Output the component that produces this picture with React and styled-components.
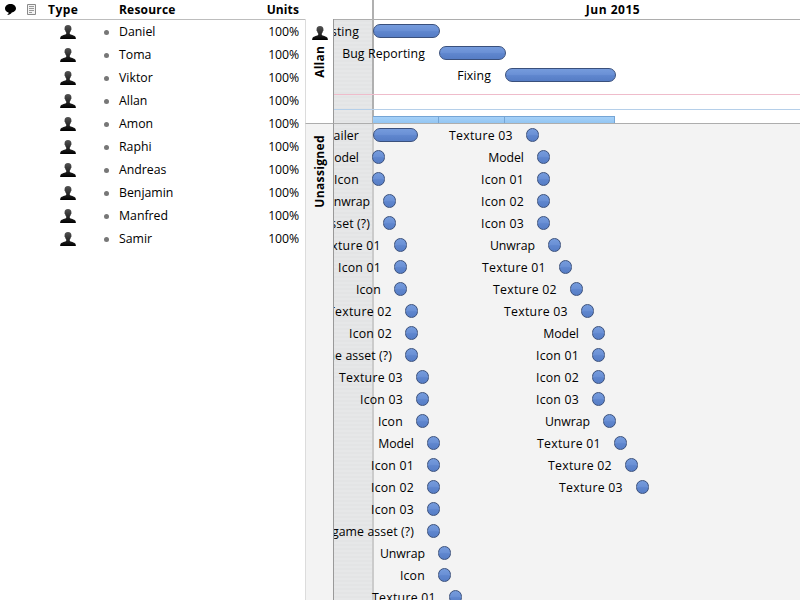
import React from "react";
import styled, { createGlobalStyle } from "styled-components";

const Global = createGlobalStyle`
  * { box-sizing: border-box; }
  body { margin: 0; background: #fff; color: #000; overflow: hidden; font-family: "Open Sans", "Noto Sans", sans-serif; font-size: 12.3px; }
`;
const Page = styled.div`
  display: flex; width: 800px; height: 600px; overflow: hidden; background: #fff;
`;
const Table = styled.section`
  width: 305px; flex: none;
`;
const columns = `display: grid; grid-template-columns: 20px 24px 54px 21px 120px 1fr; align-items: center;`;
const TableHead = styled.header`
  ${columns}
  height: 20px; border-bottom: 1px solid #bdbdbd; font-weight: 700; font-size: 12px; padding-right: 6px;
`;
const TableRow = styled.div`
  ${columns}
  height: 23px; padding-right: 6px;
`;
const HeadCell = styled.span`
  letter-spacing: ${(p) => p.$track || 0}px;
  padding-left: ${(p) => p.$pad || 0}px;
  text-align: ${(p) => (p.$end ? "right" : "left")};
  line-height: 19px; height: 19px; white-space: nowrap;
  svg { display: block; }
`;
const Name = styled.span`
  line-height: 22px;
`;
const Units = styled.span`
  text-align: right; line-height: 22px; letter-spacing: -0.1px;
`;
const IconCell = styled.span`
  grid-column: 3; padding-left: 15.5px; height: 14px;
  svg { display: block; }
`;
const Bullet = styled.i`
  width: 5px; height: 5px; border-radius: 50%; background: #777; margin: 2px 0 0 6px;
`;
const Side = styled.aside`
  width: 29px; flex: none; padding-top: 19px;
`;
const SideLane = styled.div`
  height: ${(p) => p.$height}px; padding-top: ${(p) => p.$top}px;
  background: ${(p) => p.$bg}; border-left: 1px solid #dcdcdc; border-right: 1px solid #999;
  border-bottom: ${(p) => (p.$line ? "1px solid #adadad" : "0")};
  display: flex; flex-direction: column; align-items: center; gap: 6px;
`;
const Vertical = styled.span`
  writing-mode: vertical-rl; transform: rotate(180deg); font-weight: 700; font-size: 12px; line-height: 17px;
  letter-spacing: ${(p) => p.$track || 0}px; white-space: nowrap;
`;
const Chart = styled.main`
  flex: 1; min-width: 0; overflow: hidden;
`;
const Months = styled.header`
  display: grid; grid-template-columns: 38px 1fr; height: 20px; border-bottom: 1px solid #adadad;
`;
const Month = styled.div`
  grid-column: 2; border-left: 2px solid #b0b0b0; padding-left: 52px; line-height: 20px;
  text-align: center; font-weight: 700; font-size: 12px; letter-spacing: 0.5px;
`;
const Lane = styled.div`
  height: ${(p) => p.$height}px; overflow: hidden; display: flex; flex-direction: column;
  border-bottom: ${(p) => (p.$line ? "1px solid #adadad" : "0")};
  background:
    linear-gradient(${(p) => p.$edge}, ${(p) => p.$edge}) 38px 0 / 2px 100% no-repeat,
    repeating-linear-gradient(#e3e4e5 0 2px, #e6e7e8 2px 4px) 0 0 / 38px 100% no-repeat,
    ${(p) => p.$bg};
`;
const TaskRow = styled.div`
  height: 22px; flex: none; display: flex; align-items: center;
`;
const Task = styled.div`
  width: ${(p) => p.$width}px; flex: none; display: flex; align-items: center; justify-content: flex-end; gap: 13.5px;
`;
const Label = styled.span`
  flex: none; white-space: nowrap; line-height: 20px; padding-top: 2px; letter-spacing: ${(p) => p.$track || 0}px;
`;
const Bar = styled.i`
  flex: none; width: ${(p) => p.$width}px; height: 14px; border: 1px solid #3a507c; border-radius: 7px;
  background: linear-gradient(#759bdc, #6b91d6 45%, #5f86ce 55%, #567dc5);
`;
const LimitLine = styled.div`
  flex: none; height: 1px; margin-top: ${(p) => p.$gap}px; background: ${(p) => p.$color};
`;
const LoadRow = styled.div`
  display: flex; margin: 6px 0 0 39px;
`;
const Load = styled.i`
  width: ${(p) => p.$width}px; height: 8px; border: solid #75a5d5; border-width: 1px 1px 0 0;
  background: linear-gradient(#a5d0f8, #90c4f1);
`;

const Person = () => (
  <svg width="16" height="14" viewBox="0 0 16 14">
    <defs>
      <linearGradient id="person" x1="0" y1="0" x2="0" y2="1">
        <stop offset="0" stopColor="#555" /><stop offset="0.55" stopColor="#292929" /><stop offset="1" stopColor="#000" />
      </linearGradient>
    </defs>
    <path fill="url(#person)" d="M8 0C5.6 0 4.5 1.4 4.6 3.5c-.3.6 0 1.5.5 1.8.2 1.1.7 1.8 1.1 2.3v1.4C5.5 10 1.7 10 .6 11.8Q.2 12.6.1 14h15.8q-.1-1.4-.5-2.2C14.3 10 10.5 10 9.8 9V7.6c.4-.5.9-1.2 1.1-2.3.5-.3.8-1.2.5-1.8C11.5 1.4 10.4 0 8 0z" />
  </svg>
);
const Balloon = () => (
  <svg width="20" height="19" viewBox="0 0 20 19">
    <path d="M10.5 4C7.4 4 5 5.9 5 8.4c0 2 1.5 3.6 3.6 4.1.1 1.1-.6 2-1.7 2.6 2.4-.1 4.1-1.2 4.9-2.6 2.4-.5 4.2-2.1 4.2-4.1C16 5.9 13.6 4 10.5 4z" />
  </svg>
);
const Note = () => (
  <svg width="24" height="19" viewBox="0 0 24 19">
    <path d="M7.5 4.5h8v10h-8z" fill="#f4f4f4" stroke="#8a8a8a" />
    <path d="M9 6.5h5M9 8.5h5M9 10.5h5M9 12.5h3" stroke="#999" />
  </svg>
);

const people = ["Daniel", "Toma", "Viktor", "Allan", "Amon", "Raphi", "Andreas", "Benjamin", "Manfred", "Samir"];

// Each task is [label, start offset, bar width].
const allan = [
  [["Testing", 38.5, 67.5]],
  [["Bug Reporting", 104.5, 67.5]],
  [["Fixing", 170.5, 111.5]],
];
const first = [
  ["Trailer", 38.5, 45.5], ["Model", 38], ["Icon", 38], ["Unwrap", 49], ["Ingame asset (?)", 49],
  ["Texture 01", 60], ["Icon 01", 60], ["Icon", 60], ["Texture 02", 71], ["Icon 02", 71],
  ["Ingame asset (?)", 71], ["Texture 03", 82], ["Icon 03", 82], ["Icon", 82], ["Model", 93],
  ["Icon 01", 93], ["Icon 02", 93], ["Icon 03", 93], ["Ingame asset (?)", 93], ["Unwrap", 104],
  ["Icon", 104], ["Texture 01", 115],
];
const second = [
  ["Texture 03", 192], ["Model", 203], ["Icon 01", 203], ["Icon 02", 203], ["Icon 03", 203],
  ["Unwrap", 214], ["Texture 01", 225], ["Texture 02", 236], ["Texture 03", 247], ["Model", 258],
  ["Icon 01", 258], ["Icon 02", 258], ["Icon 03", 258], ["Unwrap", 269], ["Texture 01", 280],
  ["Texture 02", 291], ["Texture 03", 302],
];
const unassigned = first.map((task, i) => (second[i] ? [task, second[i]] : [task]));

const tracking = (t) => {
  if (t.startsWith("Texture")) return 0.26;
  if (t.startsWith("Icon")) return 0.18;
  if (t === "Model" || t === "Unwrap") return -0.08;
  return 0.1;
};

function Rows({ rows }) {
  return rows.map((tasks, r) => {
    let end = 0;
    return (
      <TaskRow key={r}>
        {tasks.map(([label, at, size = 13]) => {
          const start = size === 13 ? at + 0.4 : at;
          const width = start + size - end;
          end = start + size;
          return (
            <Task key={label + start} $width={width}>
              <Label $track={tracking(label)}>{label}</Label>
              <Bar $width={size} />
            </Task>
          );
        })}
      </TaskRow>
    );
  });
}

export default function App() {
  return (
    <Page>
      <Global />
      <Table>
        <TableHead>
          <HeadCell><Balloon /></HeadCell>
          <HeadCell><Note /></HeadCell>
          <HeadCell $pad={4} $track={0.5}>Type</HeadCell>
          <span />
          <HeadCell $track={0.2}>Resource</HeadCell>
          <HeadCell $end $track={0.1}>Units</HeadCell>
        </TableHead>
        {people.map((name) => (
          <TableRow key={name}>
            <IconCell><Person /></IconCell>
            <Bullet />
            <Name>{name}</Name>
            <Units>100%</Units>
          </TableRow>
        ))}
      </Table>
      <Side>
        <SideLane $height={105} $top={7} $bg="#fff" $line>
          <Person />
          <Vertical $track={0.2}>Allan</Vertical>
        </SideLane>
        <SideLane $height={476} $top={11} $bg="#f3f3f3">
          <Vertical $track={0.35}>Unassigned</Vertical>
        </SideLane>
      </Side>
      <Chart>
        <Months><Month>Jun 2015</Month></Months>
        <Lane $height={104} $bg="#fff" $edge="#b0b0b0" $line>
          <Rows rows={allan} />
          <LimitLine $gap={8} $color="#efbccb" />
          <LimitLine $gap={14} $color="#b5cfe9" />
          <LoadRow><Load $width={66} /><Load $width={66} /><Load $width={110} /></LoadRow>
        </Lane>
        <Lane $height={476} $bg="#f3f3f3" $edge="#cbcbcb">
          <Rows rows={unassigned} />
        </Lane>
      </Chart>
    </Page>
  );
}
